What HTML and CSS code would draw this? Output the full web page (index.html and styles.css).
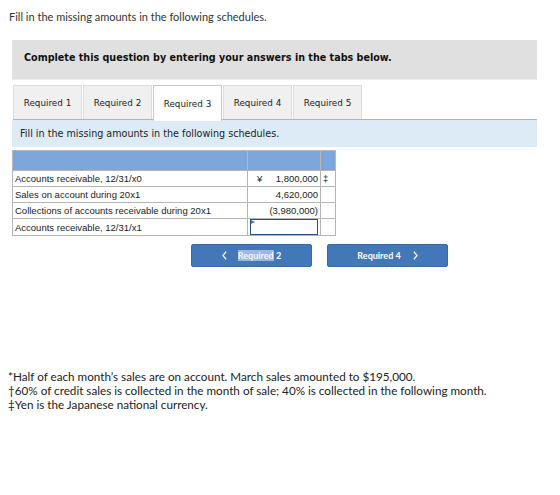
FILE: index.html
```html
<!DOCTYPE html>
<html lang="en">
<head>
    <meta charset="UTF-8">
    <title>Schedules</title>
    <link rel="stylesheet" href="styles.css">
</head>
<body>

<p class="intro">Fill in the missing amounts in the following schedules.</p>

<div class="question-box">
    <h2>Complete this question by entering your answers in the tabs below.</h2>
</div>

<div class="tabs">
    <div class="tab">Required 1</div>
    <div class="tab">Required 2</div>
    <div class="tab active">Required 3</div>
    <div class="tab">Required 4</div>
    <div class="tab">Required 5</div>
</div>

<div class="instructions">Fill in the missing amounts in the following schedules.</div>

<table class="schedule">
    <tr class="head">
        <td class="label"></td>
        <td class="amount"></td>
        <td class="mark"></td>
    </tr>
    <tr>
        <td class="label">Accounts receivable, 12/31/x0</td>
        <td class="amount"><span class="yen">¥</span>1,800,000</td>
        <td class="mark">‡</td>
    </tr>
    <tr>
        <td class="label">Sales on account during 20x1</td>
        <td class="amount">4,620,000</td>
        <td class="mark"></td>
    </tr>
    <tr>
        <td class="label">Collections of accounts receivable during 20x1</td>
        <td class="amount">(3,980,000)</td>
        <td class="mark"></td>
    </tr>
    <tr>
        <td class="label">Accounts receivable, 12/31/x1</td>
        <td class="amount input-cell"><div class="answer"></div></td>
        <td class="mark"></td>
    </tr>
</table>

<div class="nav">
    <button class="nav-btn">
        <svg class="chev" width="5" height="9" viewBox="0 0 5 9"><polyline points="4.2,0.7 0.9,4.5 4.2,8.3" fill="none" stroke="#fff" stroke-width="1.2"/></svg>
        <span class="sel">Required</span>&nbsp;2
    </button>
    <button class="nav-btn">
        Required 4
        <svg class="chev right" width="5" height="9" viewBox="0 0 5 9"><polyline points="0.8,0.7 4.1,4.5 0.8,8.3" fill="none" stroke="#fff" stroke-width="1.2"/></svg>
    </button>
</div>

<div class="notes">
    <p>*Half of each month’s sales are on account. March sales amounted to $195,000.</p>
    <p>†60% of credit sales is collected in the month of sale; 40% is collected in the following month.</p>
    <p>‡Yen is the Japanese national currency.</p>
</div>

</body>
</html>
```

FILE: styles.css
```css
* {
    margin: 0;
    padding: 0;
    box-sizing: border-box;
}

body {
    font-family: 'Lato', 'Open Sans', sans-serif;
    background: #fff;
    color: #222;
    width: 560px;
}

.intro {
    font-size: 11px;
    color: #333;
    padding: 10px 0 0 9px;
    height: 40px;
}

.question-box {
    background: #e0e0e0;
    margin: 0 23px 0 12px;
    height: 40px;
    padding: 12px 0 0 12px;
    border-bottom: 1px solid #ececec;
}

.question-box h2 {
    font-family: 'DejaVu Sans', Verdana, sans-serif;
    font-size: 9.6px;
    font-weight: bold;
    color: #111;
}

.tabs {
    display: flex;
    margin: 5px 23px 0 13px;
    height: 35px;
    border-bottom: 1px solid #b3b3b3;
}

.tab {
    width: 69px;
    margin-right: 1px;
    background: #f0f0f0;
    border: 1px solid #dcdcdc;
    border-bottom: none;
    font-family: 'DejaVu Sans', Verdana, sans-serif;
    font-size: 8.8px;
    color: #222;
    display: flex;
    align-items: center;
    justify-content: center;
    padding-top: 1px;
}

.tab.active {
    background: #fff;
    border-color: #c8c8c8;
    height: 36px;
}

.instructions {
    background: #ddebf7;
    margin: 0 23px 0 12px;
    height: 27px;
    padding: 8px 0 0 8px;
    font-family: 'DejaVu Sans', Verdana, sans-serif;
    font-size: 9.6px;
    color: #222;
}

.schedule {
    margin: 3px 0 0 12px;
    border-collapse: collapse;
    font-family: 'Liberation Sans', Arial, sans-serif;
    font-size: 9.5px;
    color: #222;
}

.schedule td {
    border: 1px solid #b5b5b5;
    height: 16px;
    padding: 0 2px;
    white-space: nowrap;
}

.schedule .head td {
    background: #7ba7dc;
    height: 20px;
}

.schedule .label {
    width: 235px;
}

.schedule .amount {
    width: 73px;
    text-align: right;
}

.schedule .mark {
    width: 15px;
    padding: 0 2px;
}

.yen {
    float: left;
    padding-left: 7px;
}

.input-cell {
    padding: 0;
}

.answer {
    position: relative;
    height: 16px;
    border: 1.5px solid #2c4e7c;
    background: #fff;
}

.answer::before {
    content: "";
    position: absolute;
    left: 0;
    top: 0;
    border-left: 4px solid #3b7bd4;
    border-top: 2px solid transparent;
    border-bottom: 2px solid transparent;
}

.nav {
    display: flex;
    gap: 15px;
    margin: 8px 0 0 191px;
}

.nav-btn {
    width: 121px;
    height: 23px;
    background: #4378b8;
    border: 1px solid #3b6aa3;
    border-radius: 2px;
    color: #fff;
    font-family: 'Lato', 'Open Sans', sans-serif;
    font-weight: bold;
    font-size: 9px;
    display: flex;
    align-items: center;
    justify-content: center;
}

.chev {
    margin-right: 11px;
}

.chev.right {
    margin: 0 0 0 12px;
}

.sel {
    background: #9ab8e0;
    color: #f4f7fc;
}

.notes {
    margin: 102px 0 0 8px;
    font-size: 11.7px;
    line-height: 14px;
    color: #222;
}
```
